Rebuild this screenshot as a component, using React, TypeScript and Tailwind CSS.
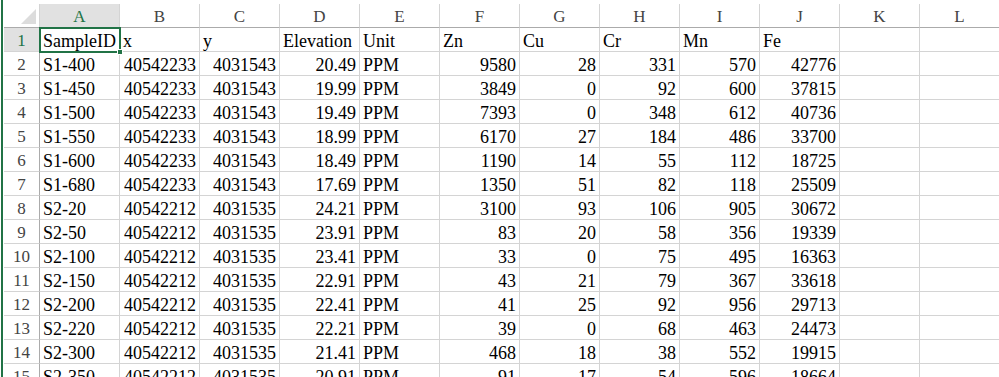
import React from 'react';

const columns = ['A', 'B', 'C', 'D', 'E', 'F', 'G', 'H', 'I', 'J', 'K', 'L'];

const header = ['SampleID', 'x', 'y', 'Elevation', 'Unit', 'Zn', 'Cu', 'Cr', 'Mn', 'Fe'];

const rows: (string | number)[][] = [
  ['S1-400', 40542233, 4031543, '20.49', 'PPM', 9580, 28, 331, 570, 42776],
  ['S1-450', 40542233, 4031543, '19.99', 'PPM', 3849, 0, 92, 600, 37815],
  ['S1-500', 40542233, 4031543, '19.49', 'PPM', 7393, 0, 348, 612, 40736],
  ['S1-550', 40542233, 4031543, '18.99', 'PPM', 6170, 27, 184, 486, 33700],
  ['S1-600', 40542233, 4031543, '18.49', 'PPM', 1190, 14, 55, 112, 18725],
  ['S1-680', 40542233, 4031543, '17.69', 'PPM', 1350, 51, 82, 118, 25509],
  ['S2-20', 40542212, 4031535, '24.21', 'PPM', 3100, 93, 106, 905, 30672],
  ['S2-50', 40542212, 4031535, '23.91', 'PPM', 83, 20, 58, 356, 19339],
  ['S2-100', 40542212, 4031535, '23.41', 'PPM', 33, 0, 75, 495, 16363],
  ['S2-150', 40542212, 4031535, '22.91', 'PPM', 43, 21, 79, 367, 33618],
  ['S2-200', 40542212, 4031535, '22.41', 'PPM', 41, 25, 92, 956, 29713],
  ['S2-220', 40542212, 4031535, '22.21', 'PPM', 39, 0, 68, 463, 24473],
  ['S2-300', 40542212, 4031535, '21.41', 'PPM', 468, 18, 38, 552, 19915],
  ['S2-350', 40542212, 4031535, '20.91', 'PPM', 91, 17, 54, 596, 18664],
];

function Cell({ value }: { value?: string | number }) {
  // numbers (and numeric strings like elevation) sit on the right, text on the left
  const numeric = value !== undefined && (typeof value === 'number' || /^[\d.]+$/.test(value));
  return (
    <div
      className={`h-[24px] border-r border-b border-[#d4d4d4] flex items-center pt-[2px] overflow-hidden whitespace-nowrap ${
        numeric ? 'justify-end pr-[3px]' : 'justify-start pl-[3px]'
      }`}
    >
      {value}
    </div>
  );
}

export default function App() {
  return (
    <div className="w-[999px] h-[377px] overflow-hidden bg-white flex text-black">
      <div className="w-[4px] shrink-0 flex">
        <div className="w-[1px]" />
        <div className="w-[2px] bg-[#217346]" />
      </div>

      <div className="pt-[4px] shrink-0">
        <div className="grid grid-cols-[36px_repeat(12,80px)] font-['Liberation_Serif',serif] text-[18px] leading-none">
          {/* corner */}
          <div className="h-[24px] border-r border-b border-r-[#d4d4d4] border-b-[#ababab] flex items-end justify-end pr-[3px] pb-[3px]">
            <svg width="15" height="15" viewBox="0 0 15 15">
              <polygon points="15,0 15,15 0,15" fill="#dcdcdc" />
            </svg>
          </div>
          {columns.map((c, i) => (
            <div
              key={c}
              className={`h-[24px] border-r border-b border-r-[#d4d4d4] border-b-[#ababab] flex items-center justify-center pt-[1px] text-[17px] ${
                i === 0 ? 'bg-[#e1e1e1] text-[#217346]' : 'text-[#444444]'
              }`}
            >
              {c}
            </div>
          ))}

          {/* row 1 */}
          <div className="h-[24px] border-r border-b border-r-[#ababab] border-b-[#d4d4d4] bg-[#e1e1e1] text-[#217346] flex items-center justify-center pt-[2px] text-[17px]">
            1
          </div>
          {columns.map((c, i) =>
            i === 0 ? (
              <div key={c} className="relative h-[24px] border-r border-b border-[#d4d4d4] flex items-center pl-[3px] pt-[2px] whitespace-nowrap">
                {header[0]}
                <div className="absolute -left-[1px] -top-[1px] w-[82px] h-[26px] border-2 border-[#217346] z-10" />
                <div className="absolute left-[77px] top-[21px] w-[6px] h-[6px] bg-[#217346] border border-white z-20" />
              </div>
            ) : (
              <div
                key={c}
                className="h-[24px] border-r border-b border-[#d4d4d4] flex items-center pl-[3px] pt-[2px] overflow-hidden whitespace-nowrap"
              >
                {header[i]}
              </div>
            )
          )}

          {rows.map((r, ri) => (
            <React.Fragment key={ri}>
              <div className="h-[24px] border-r border-b border-r-[#ababab] border-b-[#d4d4d4] text-[#444444] flex items-center justify-center pt-[2px] text-[17px]">
                {ri + 2}
              </div>
              {columns.map((c, ci) => (
                <Cell key={c} value={r[ci]} />
              ))}
            </React.Fragment>
          ))}
        </div>
      </div>
    </div>
  );
}
